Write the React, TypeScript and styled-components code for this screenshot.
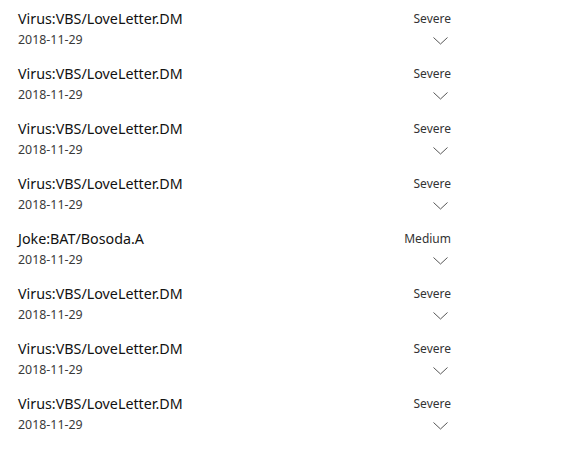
import React from 'react';
import styled, { createGlobalStyle } from 'styled-components';

const GlobalStyle = createGlobalStyle`
  html, body {
    margin: 0;
    padding: 0;
    background: #ffffff;
  }
  body {
    font-family: "Noto Sans", "Open Sans", sans-serif;
    color: #000;
  }
`;

const List = styled.ul`
  list-style: none;
  margin: 0;
  padding: 8px 0 0 18px;
  width: 433px;
`;

const Row = styled.li`
  display: flex;
  justify-content: space-between;
  height: 55px;
`;

const Info = styled.div`
  display: flex;
  flex-direction: column;
`;

const Title = styled.span`
  font-size: 14.3px;
  line-height: 22px;
  color: #111;
`;

const Date = styled.span`
  font-size: 12.4px;
  line-height: 20px;
  color: #3a3a3a;
`;

const Side = styled.div`
  display: flex;
  flex-direction: column;
  align-items: flex-end;
`;

const Severity = styled.span`
  font-size: 12px;
  line-height: 22px;
  color: #333;
`;

const Expand = styled.button`
  display: flex;
  border: none;
  background: none;
  padding: 0;
  margin: 7px 3px 0 0;
  color: #555;
  cursor: pointer;
`;

const Chevron = () => (
  <svg width="15" height="8" viewBox="0 0 15 8" fill="none" stroke="currentColor" strokeWidth="1">
    <polyline points="0.5,0.5 7.5,7 14.5,0.5" />
  </svg>
);

type Threat = { name: string; date: string; level: string };

const threats: Threat[] = [
  { name: 'Virus:VBS/LoveLetter.DM', date: '2018-11-29', level: 'Severe' },
  { name: 'Virus:VBS/LoveLetter.DM', date: '2018-11-29', level: 'Severe' },
  { name: 'Virus:VBS/LoveLetter.DM', date: '2018-11-29', level: 'Severe' },
  { name: 'Virus:VBS/LoveLetter.DM', date: '2018-11-29', level: 'Severe' },
  { name: 'Joke:BAT/Bosoda.A', date: '2018-11-29', level: 'Medium' },
  { name: 'Virus:VBS/LoveLetter.DM', date: '2018-11-29', level: 'Severe' },
  { name: 'Virus:VBS/LoveLetter.DM', date: '2018-11-29', level: 'Severe' },
  { name: 'Virus:VBS/LoveLetter.DM', date: '2018-11-29', level: 'Severe' },
];

export default function App() {
  return (
    <>
      <GlobalStyle />
      <List>
        {threats.map((t, i) => (
          <Row key={i}>
            <Info>
              <Title>{t.name}</Title>
              <Date>{t.date}</Date>
            </Info>
            <Side>
              <Severity>{t.level}</Severity>
              <Expand aria-label="Expand">
                <Chevron />
              </Expand>
            </Side>
          </Row>
        ))}
      </List>
    </>
  );
}
